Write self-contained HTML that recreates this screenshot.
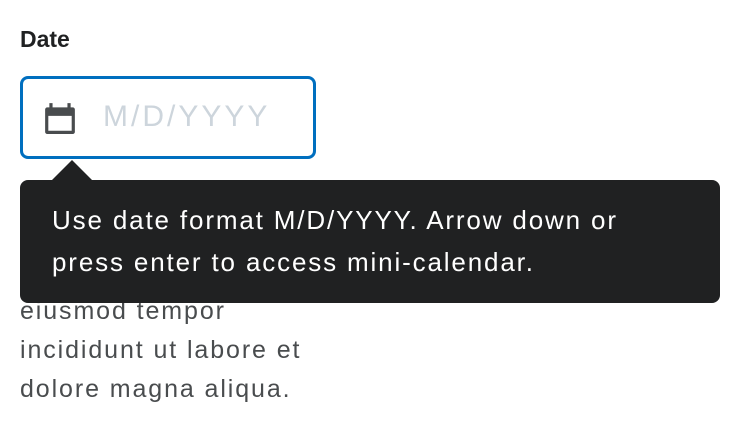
<!DOCTYPE html>
<html><head><style>
body{margin:0;width:740px;height:438px;background:#fff;font-family:"Liberation Sans",sans-serif;position:relative;overflow:hidden}
.lbl{position:absolute;left:20px;top:26px;font-size:23px;font-weight:bold;color:#202122}
.inp{position:absolute;left:20px;top:76px;width:290px;height:77px;border:3px solid #006fbf;border-radius:8px}
.ph{position:absolute;left:80px;top:21px;font-size:30px;color:#cdd5dc;letter-spacing:3px}
.body{position:absolute;left:20px;top:175px;width:400px;font-size:25px;line-height:39px;color:#494c4e;letter-spacing:1.9px;white-space:nowrap}
.tip{position:absolute;left:20px;top:180px;width:700px;height:123px;background:#202122;border-radius:8px}
.arrow{position:absolute;left:52px;top:160px;width:0;height:0;border-left:20px solid transparent;border-right:20px solid transparent;border-bottom:20px solid #202122}
.tt{position:absolute;left:32px;top:19px;font-size:26px;line-height:42px;color:#fff;letter-spacing:1.85px;white-space:nowrap}
</style></head><body>
<div class="lbl">Date</div>
<div class="inp">
<svg style="position:absolute;left:20px;top:22px" width="34" height="34" viewBox="0 0 32 32"><path fill="#494c4e" d="M6 2h3v4h14V2h3v4h2a2 2 0 0 1 2 2v21a2 2 0 0 1-2 2H4a2 2 0 0 1-2-2V8a2 2 0 0 1 2-2h2zM5 14v14h22V14z"/></svg>
<div class="ph">M/D/YYYY</div>
</div>
<div class="body">Lorem ipsum dolor sit<br>amet, consectetur<br>adipiscing elit, sed do<br>eiusmod tempor<br>incididunt ut labore et<br>dolore magna aliqua.</div>
<div class="arrow"></div>
<div class="tip"><div class="tt">Use date format M/D/YYYY. Arrow down or<br>press enter to access mini-calendar.</div></div>
</body></html>
